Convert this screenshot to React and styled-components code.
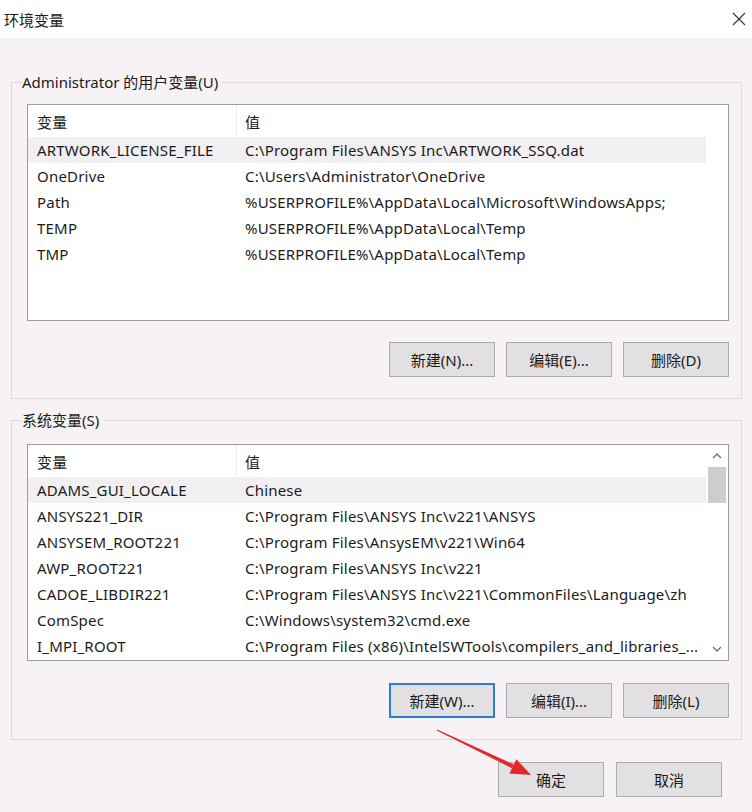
import React from 'react';
import styled, { createGlobalStyle } from 'styled-components';

const Global = createGlobalStyle`
  html, body {
    margin: 0;
    padding: 0;
    background: #f6f2f5;
  }
  body {
    font-family: "Noto Sans", "Noto Sans CJK SC", sans-serif;
    color: #1b1b1b;
  }
`;

const userVars = [
  { name: 'ARTWORK_LICENSE_FILE', value: 'C:\\Program Files\\ANSYS Inc\\ARTWORK_SSQ.dat', selected: true },
  { name: 'OneDrive', value: 'C:\\Users\\Administrator\\OneDrive' },
  { name: 'Path', value: '%USERPROFILE%\\AppData\\Local\\Microsoft\\WindowsApps;' },
  { name: 'TEMP', value: '%USERPROFILE%\\AppData\\Local\\Temp' },
  { name: 'TMP', value: '%USERPROFILE%\\AppData\\Local\\Temp' },
];

const systemVars = [
  { name: 'ADAMS_GUI_LOCALE', value: 'Chinese', selected: true },
  { name: 'ANSYS221_DIR', value: 'C:\\Program Files\\ANSYS Inc\\v221\\ANSYS' },
  { name: 'ANSYSEM_ROOT221', value: 'C:\\Program Files\\AnsysEM\\v221\\Win64' },
  { name: 'AWP_ROOT221', value: 'C:\\Program Files\\ANSYS Inc\\v221' },
  { name: 'CADOE_LIBDIR221', value: 'C:\\Program Files\\ANSYS Inc\\v221\\CommonFiles\\Language\\zh' },
  { name: 'ComSpec', value: 'C:\\Windows\\system32\\cmd.exe' },
  { name: 'I_MPI_ROOT', value: 'C:\\Program Files (x86)\\IntelSWTools\\compilers_and_libraries_...' },
];

const Window = styled.div`
  position: relative;
  width: 752px;
  height: 812px;
  background: #f6f2f5;
  overflow: hidden;
`;

const TitleBar = styled.div`
  height: 38px;
  background: #ffffff;
  display: flex;
  align-items: center;
  justify-content: space-between;
  padding: 0 6px 0 4px;
  box-sizing: border-box;
  font-size: 15px;
`;

const Group = styled.fieldset`
  margin: ${p => p.$top}px 10px 0 11px;
  padding: ${p => p.$pad}px 12px 21px 15px;
  border: 1px solid #dcdadc;
  min-width: 0;
`;

const Legend = styled.legend`
  padding: 0 4px 0 0;
  margin-left: -5px;
  font-size: 15px;
  line-height: 20px;
`;

const List = styled.div`
  height: 215px;
  border: 1px solid #9c9c9c;
  background: #ffffff;
  display: flex;
`;

const Rows = styled.div`
  width: 678px;
  display: flex;
  flex-direction: column;
`;

const Row = styled.div`
  display: flex;
  height: ${p => (p.$head ? 32 : 26)}px;
  flex: none;
  align-items: center;
  background: ${p => (p.$selected ? '#f1eff1' : '#ffffff')};
  font-size: 15px;
  letter-spacing: 0.2px;
  white-space: nowrap;
`;

const NameCell = styled.div`
  width: 209px;
  flex: none;
  padding-left: 9px;
  box-sizing: border-box;
  height: 100%;
  display: flex;
  align-items: center;
  border-right: ${p => (p.$head ? '1px solid #ececec' : '1px solid transparent')};
`;

const ValueCell = styled.div`
  flex: 1;
  min-width: 0;
  padding: 0 4px 0 8px;
  overflow: hidden;
`;

const ScrollBar = styled.div`
  width: 22px;
  margin-left: auto;
  display: flex;
  flex-direction: column;
  align-items: center;
`;

const Arrow = styled.div`
  height: 22px;
  width: 100%;
  display: flex;
  align-items: center;
  justify-content: center;
`;

const Thumb = styled.div`
  width: 18px;
  height: 36px;
  background: #cdcdcd;
`;

const Spacer = styled.div`
  flex: 1;
`;

const ButtonRow = styled.div`
  display: flex;
  justify-content: flex-end;
  gap: ${p => p.$gap || 11}px;
  margin-top: ${p => p.$top || 0}px;
  padding-right: ${p => p.$right || 0}px;
`;

const Button = styled.button`
  width: ${p => p.$w || 106}px;
  height: 35px;
  background: #e2e0e2;
  border: ${p => (p.$focus ? '2px solid #2f7fd0' : '1px solid #acacac')};
  font-family: inherit;
  font-size: 15px;
  color: #1b1b1b;
  padding: 0;
`;

const Overlay = styled.svg`
  position: absolute;
  left: 430px;
  top: 722px;
`;

const Chevron = ({ up }) => (
  <svg width="10" height="6" viewBox="0 0 10 6">
    <polyline
      points={up ? '1,5 5,1 9,5' : '1,1 5,5 9,1'}
      fill="none"
      stroke="#6b6b6b"
      strokeWidth="1.3"
    />
  </svg>
);

const VarList = ({ items, scroll }) => (
  <List>
    <Rows>
      <Row $head>
        <NameCell $head>变量</NameCell>
        <ValueCell>值</ValueCell>
      </Row>
      {items.map(item => (
        <Row key={item.name} $selected={item.selected}>
          <NameCell>{item.name}</NameCell>
          <ValueCell>{item.value}</ValueCell>
        </Row>
      ))}
    </Rows>
    {scroll && (
      <ScrollBar>
        <Arrow><Chevron up /></Arrow>
        <Thumb />
        <Spacer />
        <Arrow><Chevron /></Arrow>
      </ScrollBar>
    )}
  </List>
);

export default function App() {
  return (
    <Window>
      <Global />
      <TitleBar>
        <span>环境变量</span>
        <svg width="14" height="14" viewBox="0 0 14 14">
          <path d="M1 1 L13 13 M13 1 L1 13" stroke="#333" strokeWidth="1.1" />
        </svg>
      </TitleBar>

      <Group $top={34} $pad={12}>
        <Legend>Administrator 的用户变量(U)</Legend>
        <VarList items={userVars} />
        <ButtonRow $top={21}>
          <Button>新建(N)...</Button>
          <Button>编辑(E)...</Button>
          <Button>删除(D)</Button>
        </ButtonRow>
      </Group>

      <Group $top={11} $pad={14}>
        <Legend>系统变量(S)</Legend>
        <VarList items={systemVars} scroll />
        <ButtonRow $top={22}>
          <Button $focus>新建(W)...</Button>
          <Button>编辑(I)...</Button>
          <Button>删除(L)</Button>
        </ButtonRow>
      </Group>

      <ButtonRow $top={22} $gap={12} $right={30}>
        <Button>确定</Button>
        <Button>取消</Button>
      </ButtonRow>

      <Overlay width="110" height="60" viewBox="0 0 110 60">
        <polygon points="6.8,8.45 7.2,7.55 83.8,42.6 82,46.2" fill="#e0292b" />
        <polygon points="101,53 79.4,51.6 86.4,37.2" fill="#e0292b" />
      </Overlay>
    </Window>
  );
}
